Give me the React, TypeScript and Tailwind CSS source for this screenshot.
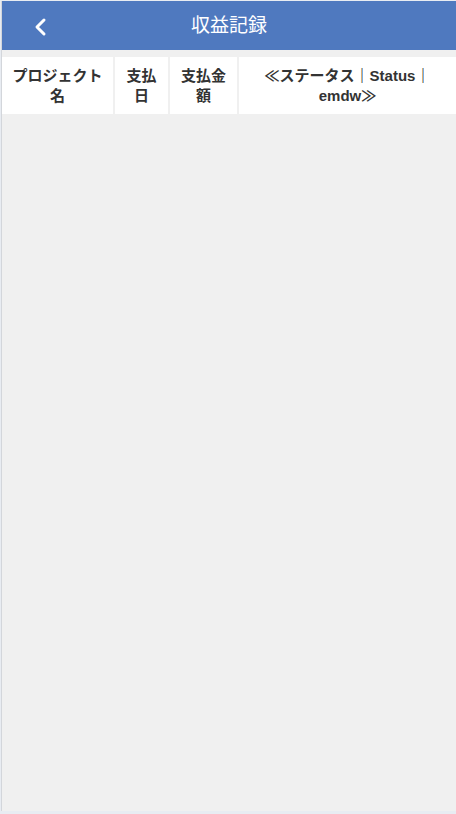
import React from "react";

export default function App() {
  const font = { fontFamily: '"Liberation Sans", "Noto Sans CJK JP", sans-serif' };
  return (
    <div className="w-[456px] h-[814px] bg-[#e8ecf2] pt-px pb-[3px] overflow-hidden" style={font}>
      <div className="h-full ml-px border-l border-[#d3d6db] bg-[#f0f0f0] flex flex-col">
        <div className="h-[49px] bg-[#4f79bf] relative flex items-center justify-center shrink-0">
          <svg className="absolute left-[30px] top-[16px]" width="18" height="20" viewBox="0 0 18 20">
            <path d="M12 3 L5 10 L12 17" fill="none" stroke="#fff" strokeWidth="3" strokeLinecap="round" strokeLinejoin="round" />
          </svg>
          <span className="text-white text-[19px] leading-none">収益記録</span>
        </div>
        <div className="mt-[7px] flex gap-[2px] h-[57px] text-[#333] font-bold text-[15px] leading-[20px]">
          <div className="w-[111px] bg-white flex items-center justify-center text-center px-2">プロジェクト名</div>
          <div className="w-[53px] bg-white flex items-center justify-center text-center px-2">支払日</div>
          <div className="w-[67px] bg-white flex items-center justify-center text-center px-2">支払金額</div>
          <div className="flex-1 bg-white flex items-center justify-center text-center px-4">
            <span>
              ≪ステータス<span className="font-black text-[#222]">｜</span>Status<span className="font-black text-[#222]">｜</span>emdw≫
            </span>
          </div>
        </div>
      </div>
    </div>
  );
}
